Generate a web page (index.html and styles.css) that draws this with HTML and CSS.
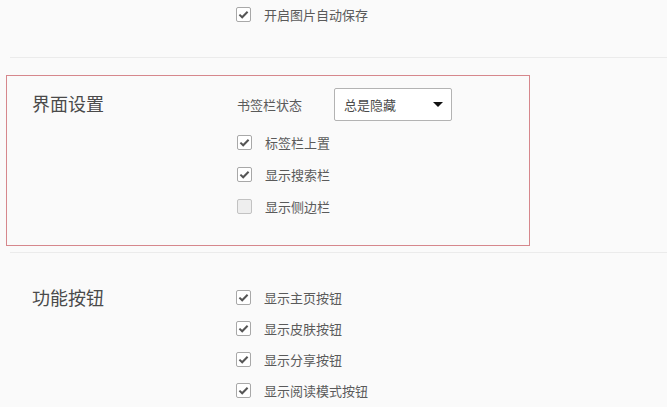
FILE: index.html
```html
<!DOCTYPE html>
<html lang="zh-CN">
<head>
<meta charset="utf-8">
<link rel="stylesheet" href="styles.css">
</head>
<body>
<div class="page">
  <section class="section section-top">
    <div class="heading"></div>
    <div class="options">
      <label class="check-row">
        <span class="box checked"><svg viewBox="0 0 15 15" width="15" height="15"><polyline points="3.4,7.6 6.2,10.3 11.6,4.7" fill="none" stroke="#555" stroke-width="2"/></svg></span>
        <span class="label">开启图片自动保存</span>
      </label>
    </div>
  </section>
  <div class="separator"></div>
  <section class="section section-ui">
    <div class="heading">界面设置</div>
    <div class="options">
      <div class="select-row">
        <span class="select-label">书签栏状态</span>
        <div class="select">
          <span class="select-value">总是隐藏</span>
          <span class="caret"></span>
        </div>
      </div>
      <label class="check-row first">
        <span class="box checked"><svg viewBox="0 0 15 15" width="15" height="15"><polyline points="3.4,7.6 6.2,10.3 11.6,4.7" fill="none" stroke="#555" stroke-width="2"/></svg></span>
        <span class="label">标签栏上置</span>
      </label>
      <label class="check-row">
        <span class="box checked"><svg viewBox="0 0 15 15" width="15" height="15"><polyline points="3.4,7.6 6.2,10.3 11.6,4.7" fill="none" stroke="#555" stroke-width="2"/></svg></span>
        <span class="label">显示搜索栏</span>
      </label>
      <label class="check-row">
        <span class="box unchecked"></span>
        <span class="label">显示侧边栏</span>
      </label>
    </div>
  </section>
  <div class="separator"></div>
  <section class="section section-buttons">
    <div class="heading">功能按钮</div>
    <div class="options">
      <label class="check-row">
        <span class="box checked"><svg viewBox="0 0 15 15" width="15" height="15"><polyline points="3.4,7.6 6.2,10.3 11.6,4.7" fill="none" stroke="#555" stroke-width="2"/></svg></span>
        <span class="label">显示主页按钮</span>
      </label>
      <label class="check-row">
        <span class="box checked"><svg viewBox="0 0 15 15" width="15" height="15"><polyline points="3.4,7.6 6.2,10.3 11.6,4.7" fill="none" stroke="#555" stroke-width="2"/></svg></span>
        <span class="label">显示皮肤按钮</span>
      </label>
      <label class="check-row">
        <span class="box checked"><svg viewBox="0 0 15 15" width="15" height="15"><polyline points="3.4,7.6 6.2,10.3 11.6,4.7" fill="none" stroke="#555" stroke-width="2"/></svg></span>
        <span class="label">显示分享按钮</span>
      </label>
      <label class="check-row">
        <span class="box checked"><svg viewBox="0 0 15 15" width="15" height="15"><polyline points="3.4,7.6 6.2,10.3 11.6,4.7" fill="none" stroke="#555" stroke-width="2"/></svg></span>
        <span class="label">显示阅读模式按钮</span>
      </label>
    </div>
  </section>
</div>
</body>
</html>
```
FILE: styles.css
```css
html, body {
  margin: 0;
  padding: 0;
  background: #fafafa;
}
body {
  font-family: "Noto Sans CJK SC", "Noto Sans", sans-serif;
  color: #5a5a5a;
  width: 667px;
  height: 407px;
  overflow: hidden;
}
.page {
  display: flex;
  flex-direction: column;
}
.section {
  display: grid;
  grid-template-columns: 236px 1fr;
  box-sizing: border-box;
}
.heading {
  padding-left: 32px;
  font-size: 18px;
  color: #4a4a4a;
  line-height: 24px;
}
.options {
  display: flex;
  flex-direction: column;
}
.section-top {
  padding-bottom: 29px;
}
.section-top .check-row {
  height: 28px;
}
.separator {
  height: 1px;
  margin-left: 10px;
  background: #ebebeb;
}
.section-ui {
  margin: 17px 0 6px 6px;
  width: 524px;
  height: 171px;
  border: 1px solid #d6878c;
  grid-template-columns: 230px 1fr;
  padding-top: 12px;
}
.section-ui .heading {
  padding-left: 25px;
  line-height: 30px;
}
.section-buttons {
  padding-top: 29px;
}
.section-buttons .heading {
  line-height: 31px;
}
.section-buttons .check-row {
  height: 31px;
}
.check-row {
  display: flex;
  align-items: center;
  height: 32px;
  font-size: 13px;
}
.check-row.first {
  margin-top: 5px;
}
.box {
  width: 15px;
  height: 15px;
  box-sizing: border-box;
  border: 1px solid #a8a8a8;
  border-radius: 2px;
  background: #fff;
  display: flex;
  align-items: center;
  justify-content: center;
  flex: none;
}
.box svg {
  display: block;
  margin: -1px;
}
.box.unchecked {
  background: #eeeeee;
  border-color: #c2c2c2;
}
.label {
  margin-left: 13px;
  color: #5a5a5a;
}
.select-row {
  display: flex;
  align-items: center;
  height: 33px;
  font-size: 13px;
}
.select-label {
  width: 97px;
  color: #5a5a5a;
}
.select {
  width: 118px;
  height: 33px;
  box-sizing: border-box;
  border: 1px solid #b3b3b3;
  border-radius: 2px;
  background: #fff;
  display: flex;
  align-items: center;
  justify-content: space-between;
  padding: 0 8px 0 9px;
}
.select-value {
  color: #4a4a4a;
}
.caret {
  width: 0;
  height: 0;
  border-left: 5px solid transparent;
  border-right: 5px solid transparent;
  border-top: 5px solid #111;
}
```
